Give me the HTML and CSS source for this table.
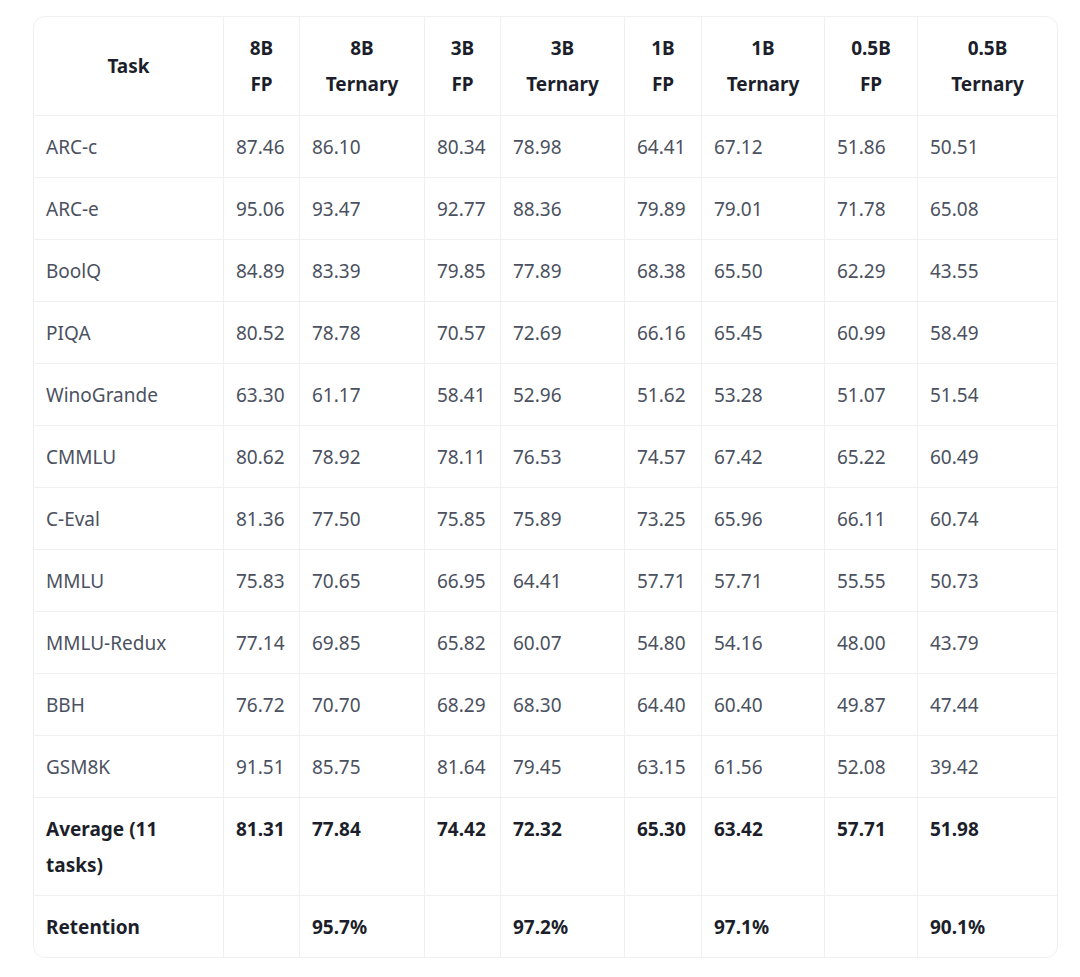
FILE: index.html
```html
<!DOCTYPE html>
<html lang="en">
<head>
<meta charset="utf-8">
<title>Benchmark results</title>
<link rel="stylesheet" href="styles.css">
</head>
<body>
<div class="table-wrap">
<table class="results">
<thead>
<tr>
<th class="c-task">Task</th>
<th class="c-8fp">8B<br>FP</th>
<th class="c-8t">8B<br>Ternary</th>
<th class="c-3fp">3B<br>FP</th>
<th class="c-3t">3B<br>Ternary</th>
<th class="c-1fp">1B<br>FP</th>
<th class="c-1t">1B<br>Ternary</th>
<th class="c-05fp">0.5B<br>FP</th>
<th class="c-05t">0.5B<br>Ternary</th>
</tr>
</thead>
<tbody>
<tr><td>ARC-c</td><td>87.46</td><td>86.10</td><td>80.34</td><td>78.98</td><td>64.41</td><td>67.12</td><td>51.86</td><td>50.51</td></tr>
<tr><td>ARC-e</td><td>95.06</td><td>93.47</td><td>92.77</td><td>88.36</td><td>79.89</td><td>79.01</td><td>71.78</td><td>65.08</td></tr>
<tr><td>BoolQ</td><td>84.89</td><td>83.39</td><td>79.85</td><td>77.89</td><td>68.38</td><td>65.50</td><td>62.29</td><td>43.55</td></tr>
<tr><td>PIQA</td><td>80.52</td><td>78.78</td><td>70.57</td><td>72.69</td><td>66.16</td><td>65.45</td><td>60.99</td><td>58.49</td></tr>
<tr><td>WinoGrande</td><td>63.30</td><td>61.17</td><td>58.41</td><td>52.96</td><td>51.62</td><td>53.28</td><td>51.07</td><td>51.54</td></tr>
<tr><td>CMMLU</td><td>80.62</td><td>78.92</td><td>78.11</td><td>76.53</td><td>74.57</td><td>67.42</td><td>65.22</td><td>60.49</td></tr>
<tr><td>C-Eval</td><td>81.36</td><td>77.50</td><td>75.85</td><td>75.89</td><td>73.25</td><td>65.96</td><td>66.11</td><td>60.74</td></tr>
<tr><td>MMLU</td><td>75.83</td><td>70.65</td><td>66.95</td><td>64.41</td><td>57.71</td><td>57.71</td><td>55.55</td><td>50.73</td></tr>
<tr><td>MMLU-Redux</td><td>77.14</td><td>69.85</td><td>65.82</td><td>60.07</td><td>54.80</td><td>54.16</td><td>48.00</td><td>43.79</td></tr>
<tr><td>BBH</td><td>76.72</td><td>70.70</td><td>68.29</td><td>68.30</td><td>64.40</td><td>60.40</td><td>49.87</td><td>47.44</td></tr>
<tr><td>GSM8K</td><td>91.51</td><td>85.75</td><td>81.64</td><td>79.45</td><td>63.15</td><td>61.56</td><td>52.08</td><td>39.42</td></tr>
<tr class="strong"><td>Average (11 tasks)</td><td>81.31</td><td>77.84</td><td>74.42</td><td>72.32</td><td>65.30</td><td>63.42</td><td>57.71</td><td>51.98</td></tr>
<tr class="strong last"><td>Retention</td><td></td><td>95.7%</td><td></td><td>97.2%</td><td></td><td>97.1%</td><td></td><td>90.1%</td></tr>
</tbody>
</table>
</div>
</body>
</html>
```

FILE: styles.css
```css
html, body {
  margin: 0;
  padding: 0;
  background: #ffffff;
}

body {
  padding: 16px 22px 0 33px;
  font-family: "Noto Sans", "Liberation Sans", sans-serif;
  font-size: 19px;
  color: #4b5160;
}

.table-wrap {
  width: 1025px;
  box-sizing: border-box;
  border: 1px solid #f0f0f2;
  border-radius: 12px;
  overflow: hidden;
}

.results {
  width: 1023px;
  border-collapse: separate;
  border-spacing: 0;
  table-layout: fixed;
}

.results th,
.results td {
  box-sizing: border-box;
  line-height: 36px;
  padding: 13px 8px 12px 12px;
  border-right: 1px solid #f0f0f2;
  border-bottom: 1px solid #f0f0f2;
  text-align: left;
  vertical-align: top;
  white-space: normal;
}

.results th:last-child,
.results td:last-child {
  border-right: none;
}

.results th {
  text-align: center;
  vertical-align: middle;
  font-weight: 700;
  color: #1c1f2b;
  padding: 13px 6px 13px 6px;
}

.results tr.last td {
  border-bottom: none;
}

.results tr.strong td {
  font-weight: 700;
  color: #1c1f2b;
}

.c-task { width: 190px; }
.c-8fp { width: 76px; }
.c-8t { width: 125px; }
.c-3fp { width: 76px; }
.c-3t { width: 124px; }
.c-1fp { width: 77px; }
.c-1t { width: 123px; }
.c-05fp { width: 93px; }
.c-05t { width: 139px; }
```
